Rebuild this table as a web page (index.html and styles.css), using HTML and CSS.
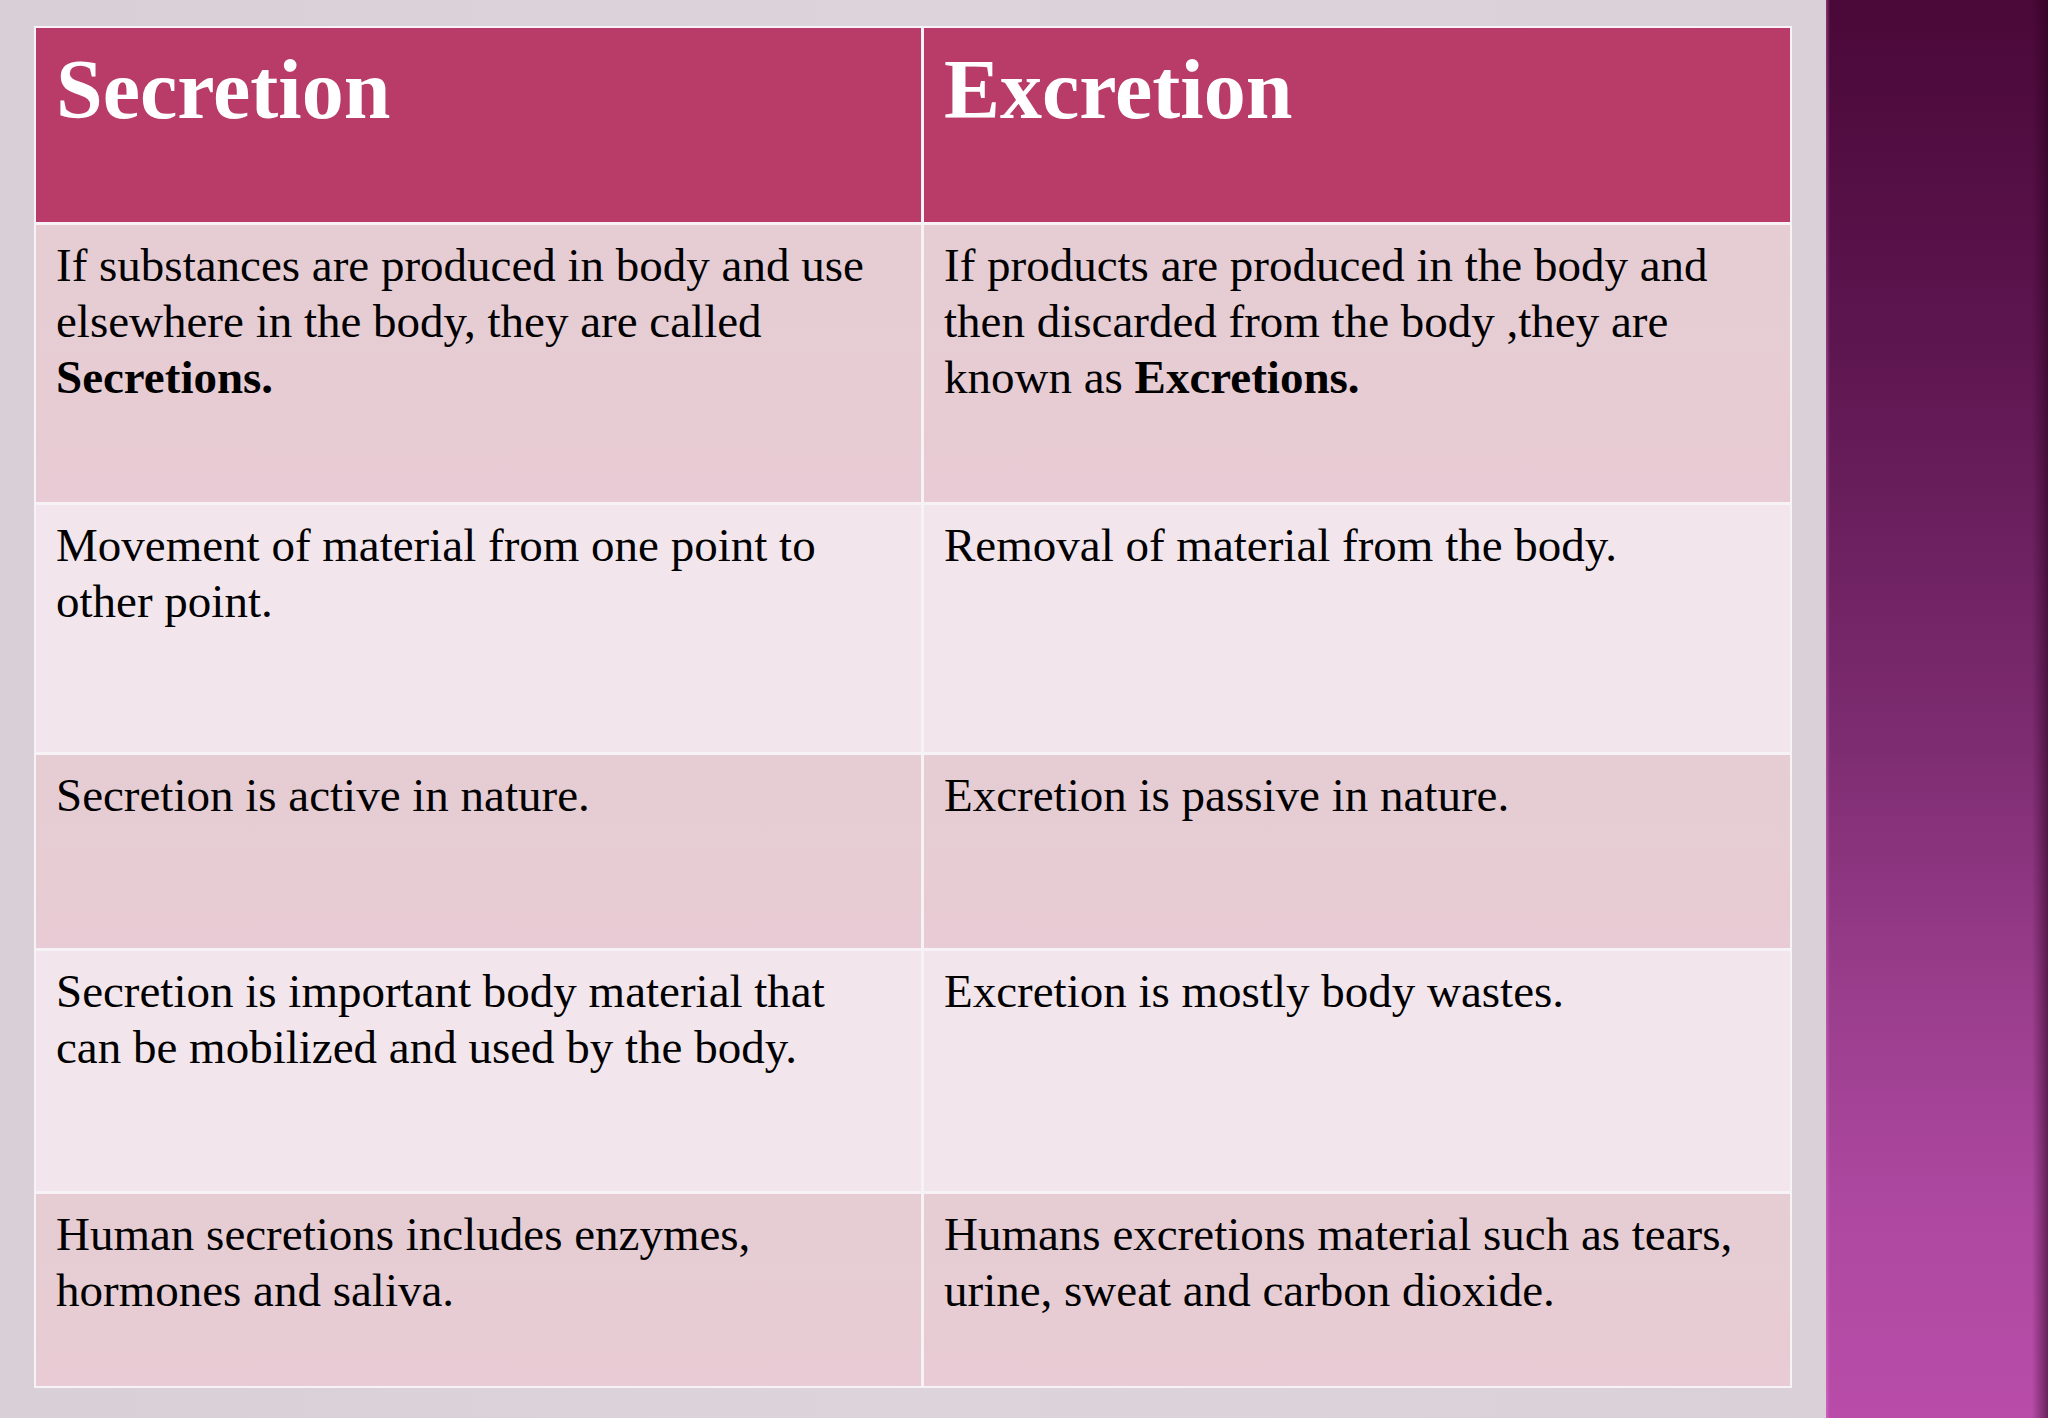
FILE: index.html
```html
<!DOCTYPE html>
<html lang="en">
<head>
<meta charset="utf-8">
<title>Secretion vs Excretion</title>
<link rel="stylesheet" href="styles.css">
</head>
<body>
<div class="slide">
  <main class="stage">
    <div class="table">
      <div class="cell head">Secretion</div>
      <div class="cell head">Excretion</div>

      <div class="cell odd">If substances are produced in body and use elsewhere in the body, they are called <b>Secretions.</b></div>
      <div class="cell odd">If products are produced in the body and then discarded from the body ,they are known as <b>Excretions.</b></div>

      <div class="cell even">Movement of material from one point to other point.</div>
      <div class="cell even">Removal of material from the body.</div>

      <div class="cell odd">Secretion is active in nature.</div>
      <div class="cell odd">Excretion is passive in nature.</div>

      <div class="cell even">Secretion is important body material that can be mobilized and used by the body.</div>
      <div class="cell even">Excretion is mostly body wastes.</div>

      <div class="cell odd">Human secretions includes enzymes, hormones and saliva.</div>
      <div class="cell odd">Humans excretions material such as tears, urine, sweat and carbon dioxide.</div>
    </div>
  </main>
  <aside class="band"></aside>
</div>
</body>
</html>
```
FILE: styles.css
```css
html, body {
  margin: 0;
  padding: 0;
  width: 2048px;
  height: 1418px;
  overflow: hidden;
}

body {
  font-family: "Liberation Serif", "Times New Roman", serif;
  background: #dcd3da;
}

.slide {
  display: flex;
  width: 2048px;
  height: 1418px;
}

.stage {
  width: 1826px;
  box-sizing: border-box;
  padding: 26px 0 0 34px;
  background: linear-gradient(90deg, #d9d0d7 0%, #ddd4db 50%, #dad1d8 100%);
}

.band {
  flex: 1;
  background:
    linear-gradient(90deg, rgba(255,140,230,0.35) 0px, rgba(255,140,230,0) 4px, rgba(0,0,0,0) 206px, rgba(40,0,30,0.55) 222px),
    linear-gradient(180deg, #4a0838 0%, #5e1650 25%, #7a2a6e 50%, #9a3d8c 70%, #ad48a0 85%, #b84ca8 100%);
}

.table {
  display: grid;
  grid-template-columns: 885px 866px;
  grid-template-rows: 194px 277px 247px 193px 240px 192px;
  gap: 3px;
  width: 1754px;
  border: 2px solid #f7f2f5;
  background: #f7f2f5;
}

.cell {
  box-sizing: border-box;
  padding: 12px 20px 0 20px;
  font-size: 47px;
  line-height: 56px;
  color: #000;
}

.cell b {
  font-weight: bold;
}

.head {
  background: #b93c68;
  color: #fff;
  font-weight: bold;
  font-size: 84px;
  line-height: 84px;
  padding-top: 20px;
}

.odd {
  background: linear-gradient(180deg, #e5cdd3 0%, #e8cbd4 100%);
}

.even {
  background: #f2e6ec;
}
```
